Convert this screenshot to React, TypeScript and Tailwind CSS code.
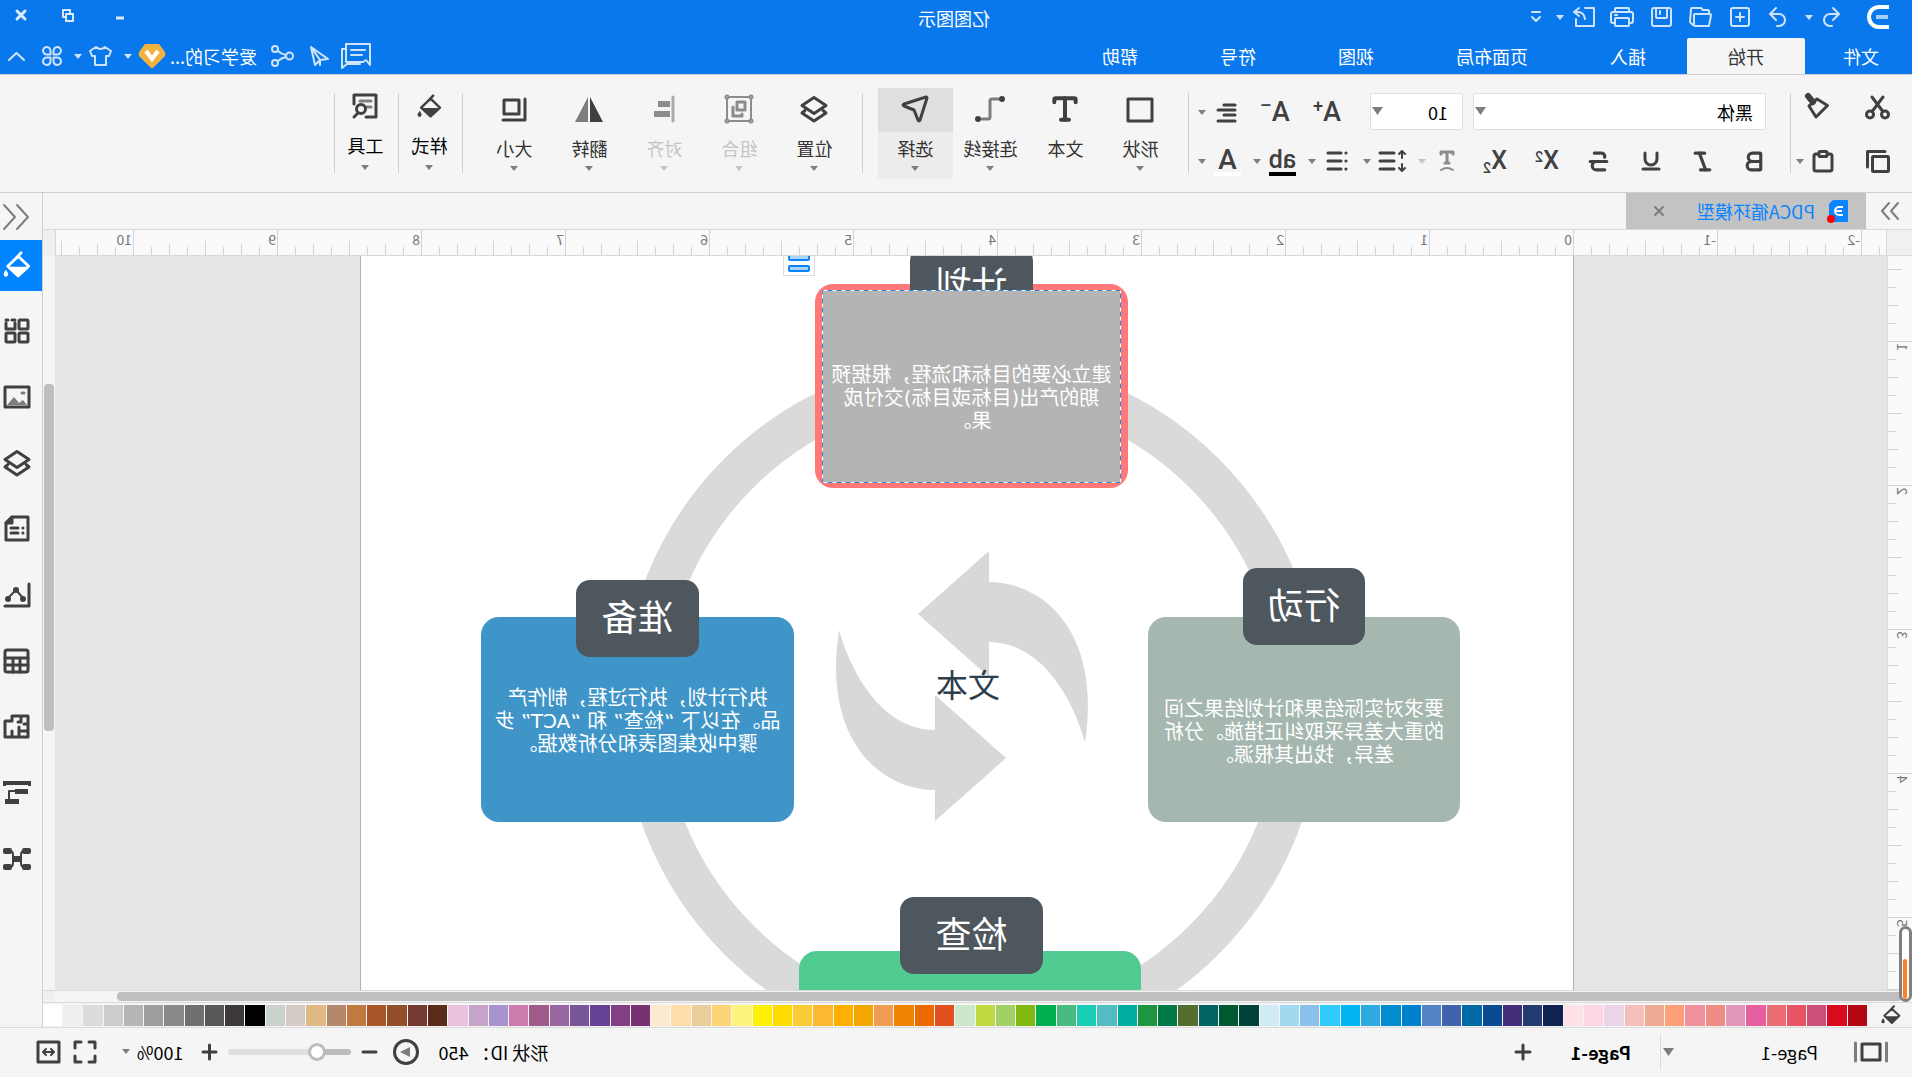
import type { ReactNode } from 'react'
import { Bold, Italic, Strikethrough, Type, Underline } from 'lucide-react'
import clsx from 'clsx'

const TABS = ['开始', '插入', '页面布局', '视图', '符号', '帮助']

const SWATCHES = [
  '#b50713', '#d80a1d', '#cb5078', '#e95464', '#ec6d74', '#e75f9e', '#e198b8', '#ee8c85', '#f0909a', '#ff9f78',
  '#efaa94', '#f6bfbc', '#ead5e8', '#fdd5e4', '#fde1e5', '#10224f', '#243a72', '#432e79', '#094a91', '#006ba6',
  '#4063ad', '#5383c4', '#0081ce', '#008ccd', '#2eaae3', '#00b5f2', '#30cbfb', '#8ac1ea', '#a1d9f0', '#ceebf6',
  '#004237', '#005931', '#006463', '#566d30', '#007a46', '#1d9640', '#00ae9f', '#51bdc2', '#1aceb5', '#47bb80',
  '#00af50', '#80ba10', '#a3d064', '#c0d943', '#cde7ca', '#e2501f', '#ec6900', '#f08300', '#f29b52', '#f1a700',
  '#feb000', '#fdb832', '#f9cb35', '#ffdb00', '#ffef00', '#fcf37e', '#fed575', '#ebcd99', '#fedda9', '#fde9cf',
  '#793271', '#833f83', '#674196', '#775598', '#97689f', '#a05a8c', '#ce7cb0', '#a993cf', '#c6a4c9', '#ebc1db',
  '#5a2a1b', '#763b30', '#944f2a', '#a85527', '#c07a40', '#b5876b', '#dfb884', '#d5cbc6', '#c9d3cb', '#000000',
  '#3e3838', '#595757', '#6f7070', '#888989', '#9d9f9e', '#b4b5b5', '#cbcdcc', '#dcdcdc', '#efefef', '#ffffff',
]

const H_UNITS = [-3, -2, -1, 0, 1, 2, 3, 4, 5, 6, 7, 8, 9, 10]
const V_UNITS = [0, 1, 2, 3, 4, 5]

function Svg({ w, h, sw = 2, children }: { w: number; h: number; sw?: number; children: ReactNode }) {
  return (
    <svg
      width={w}
      height={h}
      viewBox={`0 0 ${w} ${h}`}
      fill="none"
      stroke="currentColor"
      strokeWidth={sw}
      strokeLinecap="round"
      strokeLinejoin="round"
      className="shrink-0 overflow-visible"
      aria-hidden
    >
      {children}
    </svg>
  )
}

function Caret({ className = 'text-[#7d7d7d]' }: { className?: string }) {
  return (
    <svg width="8" height="5" viewBox="0 0 8 5" className={clsx('shrink-0', className)} aria-hidden>
      <path d="M0 0h8L4 5z" fill="currentColor" />
    </svg>
  )
}

function IconButton({ label, className, children }: { label: string; className?: string; children: ReactNode }) {
  return (
    <button type="button" aria-label={label} className={clsx('flex items-center justify-center', className)}>
      {children}
    </button>
  )
}

/* ---------- shared icons ---------- */

function Bucket({ w = 24 }: { w?: number }) {
  return (
    <svg width={w} height={w} viewBox="0 0 24 24" fill="none" stroke="currentColor" className="shrink-0" aria-hidden>
      <path d="M11 4.500 20 13l-9 8.500L2 13z" strokeWidth="2.400" strokeLinejoin="round" />
      <path d="M3 13.500h16.500l-8.500 8z" fill="currentColor" stroke="none" />
      <path d="M12.500 6 8.500 1.500" strokeWidth="2.400" strokeLinecap="round" />
      <path d="M21.500 16c1.300 2 2 3 2 4a2 2 0 0 1-4 0c0-1 .7-2 2-4z" fill="currentColor" stroke="none" />
    </svg>
  )
}

function LayersIcon() {
  return (
    <Svg w={28} h={28} sw={3}>
      <path d="M14 2.500 26 10.500l-12 8-12-8z" />
      <path d="M5 15.500l-3 2.500 12 8 12-8-3-2.500" />
    </Svg>
  )
}

function EdrawMark() {
  return (
    <Svg w={24} h={24} sw={4}>
      <path d="M1 2h10a10 10 0 0 1 0 20H1" strokeLinecap="butt" />
      <path d="M2 12h12" stroke="#a5cdf8" strokeLinecap="butt" />
    </Svg>
  )
}

/* ---------- header ---------- */

function TitleBar() {
  return (
    <div className="grid h-[38px] grid-cols-[1fr_auto_1fr] items-center">
      <div className="flex items-center pb-[4px] pl-[22px] text-[#cfe4fb]">
        <span className="mr-[26px] text-white"><EdrawMark /></span>
        <IconButton label="撤销" className="w-[18px]">
          <Svg w={18} h={20}><path d="M7 1 1 7l6 6M1.500 7H10a6 6 0 0 1 0 12H8" /></Svg>
        </IconButton>
        <IconButton label="撤销列表" className="w-[26px]"><Caret className="text-[#cfe4fb]" /></IconButton>
        <IconButton label="重做" className="w-[36px]">
          <Svg w={18} h={20}><path d="m11 1 6 6-6 6M16.500 7H8a6 6 0 0 0 0 12h2" /></Svg>
        </IconButton>
        <IconButton label="新建" className="w-[40px]">
          <Svg w={20} h={20}><rect x="1" y="1" width="18" height="18" rx="2" /><path d="M10 6v8M6 10h8" /></Svg>
        </IconButton>
        <IconButton label="打开" className="w-[39px]">
          <Svg w={23} h={20}><path d="M3 19 1 8q0-1 1-1h15q1 0 1 1v10q0 1-1 1zM3 7V4q0-1 1-1h5l2-2h9q1 0 1 1l1 13-3 3" /></Svg>
        </IconButton>
        <IconButton label="保存" className="w-[39px]">
          <Svg w={21} h={20}><rect x="1" y="1" width="19" height="18" rx="2" /><path d="M5 1v9q0 1 1 1h9q1 0 1-1V1M12 4v3" /></Svg>
        </IconButton>
        <IconButton label="打印" className="w-[39px]">
          <Svg w={24} h={20}><path d="M5 5V2q0-1 1-1h12q1 0 1 1v3M5 16H3q-2 0-2-2V7q0-2 2-2h18q2 0 2 2v7q0 2-2 2h-2" /><rect x="5" y="11" width="14" height="8" rx="1" /><path d="M17 8h2" /></Svg>
        </IconButton>
        <IconButton label="导出" className="w-[38px]">
          <Svg w={22} h={20}><path d="M10 1H1v18h18v-7" /><path d="m16 1 5 4-5 4M20 5h-3q-6 0-7 7" /></Svg>
        </IconButton>
        <IconButton label="导出列表" className="w-[10px]"><Caret className="text-[#cfe4fb]" /></IconButton>
        <IconButton label="自定义工具栏" className="w-[38px]">
          <Svg w={10} h={12}><path d="M1 1h8M1 6l4 4 4-4" /></Svg>
        </IconButton>
      </div>
      <h1 className="pb-[2px] pl-[4px] text-[18px] leading-[24px] text-white">亿图图示</h1>
      <div className="flex items-center justify-end pb-[8px] text-[#dcebfc]">
        <IconButton label="最小化" className="w-[52px] pt-[6px]"><Svg w={10} h={4} sw={3}><path d="M1 2h8" strokeLinecap="butt" /></Svg></IconButton>
        <IconButton label="还原" className="w-[52px]">
          <Svg w={12} h={13}><rect x="1" y="5" width="7" height="7" /><path d="M4 4V1h7v7H9" /></Svg>
        </IconButton>
        <IconButton label="关闭" className="w-[42px]"><Svg w={10} h={10} sw={3}><path d="m1 1 8 8M9 1 1 9" /></Svg></IconButton>
      </div>
    </div>
  )
}

function MenuBar() {
  return (
    <div className="flex h-[36px] items-stretch text-[18px] leading-[24px] text-white">
      <button type="button" className="w-[107px] pr-[5px]">文件</button>
      <nav className="flex">
        {TABS.map((tab, i) => (
          <button key={tab} type="button" className={clsx('px-[41px]', i === 0 && 'rounded-t-[2px] bg-[#f5f5f5] text-[#333]')}>
            {tab}
          </button>
        ))}
      </nav>
      <div className="ml-auto flex items-center text-[#cfe4fb]">
        <IconButton label="消息" className="w-[43px]">
          <Svg w={30} h={26}>
            <path d="M1 22V1h24v18H8l-3-2z" />
            <path d="M6 7h14M9 12h11" />
            <path d="M25 6h4v19l-5-4H11" />
          </Svg>
        </IconButton>
        <IconButton label="发送" className="w-[31px]">
          <Svg w={20} h={20}><path d="M1 13 18 1l-4 18-5-5zM9 14v5M18 1 9 14" /></Svg>
        </IconButton>
        <IconButton label="分享" className="w-[42px]">
          <Svg w={23} h={22}><circle cx="4.500" cy="11" r="3.500" /><circle cx="19" cy="4" r="3" /><circle cx="19" cy="18" r="3" /><path d="M8 10q5-1 8-4M8 12q5 1 8 4" /></Svg>
        </IconButton>
        <button type="button" className="px-[4px] text-white">爱学习的...</button>
        <IconButton label="会员" className="w-[28px]">
          <svg width="28" height="26" viewBox="0 0 28 26" aria-hidden>
            <path d="M7 1h14l6 8q1 2 0 4L15 25h-2L1 13q-1-2 0-4z" fill="#f3b140" />
            <path d="m8 8 6 8 6-8" fill="none" stroke="#fff" strokeWidth="4" />
          </svg>
        </IconButton>
        <IconButton label="会员菜单" className="w-[20px]"><Caret className="text-[#cfe4fb]" /></IconButton>
        <IconButton label="主题" className="w-[34px]">
          <Svg w={23} h={20}><path d="M7 1 1 5l2 5h3v9h11v-9h3l2-5-6-4q-4.500 4-9 0z" /></Svg>
        </IconButton>
        <IconButton label="主题菜单" className="w-[12px]"><Caret className="text-[#cfe4fb]" /></IconButton>
        <IconButton label="应用" className="w-[40px]">
          <Svg w={20} h={20}>
            <path d="M8.500 8.500H5a3.750 3.750 0 1 1 3.500-3.500zM11.500 8.500H15A3.750 3.750 0 1 0 11.500 5zM8.500 11.500H5A3.750 3.750 0 1 0 8.500 15zM11.500 11.500H15a3.750 3.750 0 1 1-3.500 3.500z" />
          </Svg>
        </IconButton>
        <IconButton label="收起功能区" className="mr-[2px] w-[30px]"><Svg w={17} h={9}><path d="m1 8 7.500-7L16 8" /></Svg></IconButton>
      </div>
    </div>
  )
}

/* ---------- ribbon ---------- */

function Divider() {
  return <div className="h-[80px] w-px shrink-0 bg-[#cfcfcf]" />
}

function Tool({ label, children }: { label: string; children: ReactNode }) {
  return <IconButton label={label} className="h-[30px] w-[52px]">{children}</IconButton>
}

function MenuTool({ label, off, children }: { label: string; off?: boolean; children: ReactNode }) {
  return (
    <button type="button" aria-label={label} disabled={off} className={clsx('flex h-[30px] w-[55px] items-center', off && 'text-[#8c8c8c]')}>
      <span className="flex w-[43px] justify-center">{children}</span>
      <Caret className={off ? 'text-[#c4c4c4]' : 'text-[#7d7d7d]'} />
    </button>
  )
}

function BigTool({ label, off, menu = true, active, narrow, children }: {
  label: string
  off?: boolean
  menu?: boolean
  active?: boolean
  narrow?: boolean
  children: ReactNode
}) {
  return (
    <button
      type="button"
      disabled={off}
      className={clsx(
        'flex h-[91px] flex-col items-center rounded-[2px]',
        narrow ? 'w-[63px] pl-[2px]' : 'w-[75px]',
        active && 'bg-[#ececec]',
        off ? 'text-[#8c8c8c]' : 'text-[#404040]',
      )}
    >
      <span className={clsx('flex h-[44px] w-full items-center justify-center pb-[2px]', active && 'bg-[#dfdfdf]')}>{children}</span>
      <span className={clsx('mt-[4px] text-[18px] leading-[24px]', off ? 'text-[#c4c4c4]' : narrow ? 'text-black' : 'text-[#333]')}>{label}</span>
      {menu && <span className={narrow ? 'mt-[8px]' : 'mt-[6px]'}><Caret className={off ? 'text-[#c4c4c4]' : 'text-[#7d7d7d]'} /></span>}
    </button>
  )
}

function FontControls() {
  return (
    <div className="w-[601px]">
      <div className="flex h-[37px] items-center">
        <div className="relative ml-[24px] w-[293px]">
          <select aria-label="字体" className="h-[37px] w-full appearance-none rounded-[2px] border border-[#dedede] bg-white pt-[2px] pl-[12px] text-[18px] text-black">
            <option>黑体</option>
          </select>
          <svg width="11" height="8" viewBox="0 0 11 8" className="pointer-events-none absolute top-[14px] right-[2px]" aria-hidden>
            <path d="M0 0h11L5.500 8z" fill="#7d7d7d" />
          </svg>
        </div>
        <div className="relative ml-[10px] w-[93px]">
          <select aria-label="字号" className="h-[37px] w-full appearance-none rounded-[2px] border border-[#dedede] bg-white pt-[2px] pl-[14px] text-[18px] text-black">
            <option>10</option>
          </select>
          <svg width="11" height="8" viewBox="0 0 11 8" className="pointer-events-none absolute top-[14px] right-[2px]" aria-hidden>
            <path d="M0 0h11L5.500 8z" fill="#7d7d7d" />
          </svg>
        </div>
        <div className="ml-auto flex pt-[2px] pr-[5px]">
          <Tool label="增大字号"><span className="font-[Roboto] text-[27px] leading-[27px] font-medium">A<sup className="text-[18px] leading-[0]">+</sup></span></Tool>
          <Tool label="减小字号"><span className="font-[Roboto] text-[27px] leading-[27px] font-medium">A<sup className="text-[18px] leading-[0]">–</sup></span></Tool>
          <MenuTool label="对齐方式"><Svg w={20} h={20} sw={3}><path d="M2 2h11M2 7h17M2 12h11M2 18h17" /></Svg></MenuTool>
        </div>
      </div>
      <div className="mt-[15px] flex h-[32px] items-center pl-[9px]">
        <Tool label="加粗"><Bold size={25} strokeWidth={3} /></Tool>
        <Tool label="斜体"><Italic size={25} strokeWidth={3} /></Tool>
        <Tool label="下划线"><Underline size={24} strokeWidth={3} /></Tool>
        <Tool label="删除线"><Strikethrough size={25} strokeWidth={3} /></Tool>
        <Tool label="上标"><span className="font-[Roboto] text-[25px] leading-[26px] font-medium">X<sup className="text-[14px] leading-[0]">2</sup></span></Tool>
        <Tool label="下标"><span className="font-[Roboto] text-[25px] leading-[26px] font-medium">X<sub className="text-[14px] leading-[0]">2</sub></span></Tool>
        <MenuTool label="文字排列" off>
          <Svg w={18} h={22} sw={3}><path d="M3 4V2h12v2M9 2v11M7 13h4" /><path d="M3 20q6-4 12 0" strokeWidth="2" /></Svg>
        </MenuTool>
        <MenuTool label="行距">
          <Svg w={28} h={22} sw={3}><path d="M12 3h14M12 11h14M12 19h14" /><path d="M4 1v7M4 14v7M1 4l3-3 3 3M1 18l3 3 3-3" strokeWidth="2" /></Svg>
        </MenuTool>
        <MenuTool label="项目符号">
          <Svg w={22} h={22} sw={3}><path d="M7 3h13M7 11h13M7 19h13M2 3h.1M2 11h.1M2 19h.1" /></Svg>
        </MenuTool>
        <MenuTool label="突出显示">
          <span className="border-b-[4px] border-black font-[Roboto] text-[25px] leading-[25px] font-medium">ab</span>
        </MenuTool>
        <MenuTool label="字体颜色">
          <span className="w-[27px] border-b-[4px] border-white font-[Roboto] text-[28px] leading-[25px] font-medium">A</span>
        </MenuTool>
      </div>
    </div>
  )
}

function Ribbon() {
  return (
    <div className="flex h-[118px] items-start border-b border-[#cfcfcf] bg-[#f5f5f5] pt-[18px] text-[#404040]">
      <div className="-mt-[1px] grid w-[121px] grid-cols-[56px_1fr] gap-y-[24px] pl-[14px]">
        <IconButton label="剪切" className="h-[30px] w-[40px]">
          <Svg w={25} h={23} sw={3}><circle cx="5" cy="18.500" r="3.500" /><circle cx="20" cy="18.500" r="3.500" /><path d="M7.500 15 18 1M17.500 15 7 1" /></Svg>
        </IconButton>
        <IconButton label="格式刷" className="h-[30px] w-[48px] pb-[2px]">
          <Svg w={23} h={24} sw={3}><path d="M1.500 11.500 12 5l8 7-7 11z" /><path d="m16 8 5-6" strokeWidth="6" /></Svg>
        </IconButton>
        <IconButton label="复制" className="h-[30px] w-[40px]">
          <Svg w={24} h={23} sw={3}><rect x="1.500" y="6.500" width="16" height="15" rx="1" /><path d="M5 1.500h17.500V17" /></Svg>
        </IconButton>
        <IconButton label="粘贴" className="h-[30px] w-[48px] gap-[8px] pl-[6px]">
          <Svg w={22} h={23} sw={3}><path d="M6 4H4Q2 4 2 6v13q0 2 2 2h14q2 0 2-2V6q0-2-2-2h-2" /><rect x="7" y="1.500" width="8" height="5" rx="1" /></Svg>
          <Caret />
        </IconButton>
      </div>
      <Divider />
      <FontControls />
      <Divider />
      <div className="-mt-[5px] flex pl-[10px]">
        <BigTool label="形状"><Svg w={28} h={25} sw={3}><rect x="2" y="2" width="24" height="22" /></Svg></BigTool>
        <BigTool label="文本" menu={false}><Type size={32} strokeWidth={3} /></BigTool>
        <BigTool label="连接线">
          <Svg w={30} h={26} sw={3}>
            <path d="M6 3h7q2 0 2 2v16q0 2 2 2h6" stroke="#7d7d7d" />
            <circle cx="3" cy="3" r="3" fill="currentColor" stroke="none" />
            <circle cx="27" cy="23" r="3" fill="currentColor" stroke="none" />
          </Svg>
        </BigTool>
        <BigTool label="选择" active><Svg w={28} h={28} sw={3}><path d="M3 2q-1 0-1 1l7 22q1 2 2 0l4-10 10-4q2-1 0-2z" /></Svg></BigTool>
      </div>
      <div className="ml-[15px]"><Divider /></div>
      <div className="-mt-[5px] flex pr-[14px] pl-[10px]">
        <BigTool label="位置"><LayersIcon /></BigTool>
        <BigTool label="组合" off>
          <Svg w={30} h={30}>
            <path d="M5 3h20M5 27h20M3 5v20M27 5v20" />
            <circle cx="3" cy="3" r="1.500" /><circle cx="27" cy="3" r="1.500" /><circle cx="3" cy="27" r="1.500" /><circle cx="27" cy="27" r="1.500" />
            <path d="M9 8h8v8H9zM21 13v9h-9v-2" strokeWidth="3" />
          </Svg>
        </BigTool>
        <BigTool label="对齐" off>
          <Svg w={22} h={28} sw={3}>
            <path d="M2 2v24" stroke="#aaa" />
            <path d="M5 6h12v6H5zM5 16h16v6H5z" fill="currentColor" stroke="none" />
          </Svg>
        </BigTool>
        <BigTool label="翻转">
          <Svg w={28} h={25}>
            <path d="M13 0v25H0z" fill="currentColor" stroke="none" />
            <path d="M15 0v25h13z" fill="#7d7d7d" stroke="none" />
          </Svg>
        </BigTool>
        <BigTool label="大小">
          <Svg w={26} h={25} sw={3}><rect x="8" y="3" width="15" height="14" /><path d="M2 2v21h22" /></Svg>
        </BigTool>
      </div>
      <Divider />
      <div className="-mt-[8px]"><BigTool label="样式" narrow><Bucket w={25} /></BigTool></div>
      <Divider />
      <div className="-mt-[8px]">
        <BigTool label="工具" narrow>
          <Svg w={26} h={26} sw={3}>
            <path d="M12 24H2V2h22v9" />
            <path d="M7 8h11M7 14h4" stroke="#7d7d7d" />
            <circle cx="17" cy="16" r="4.500" /><path d="m20 20 4 4" />
          </Svg>
        </BigTool>
      </div>
      <Divider />
    </div>
  )
}

/* ---------- workspace ---------- */

function DocumentTabs() {
  return (
    <div className="flex h-[36px] items-stretch">
      <IconButton label="展开符号库" className="w-[44px] text-[#7d7d7d]">
        <Svg w={18} h={18}><path d="m1 1 7 8-7 8M10 1l7 8-7 8" /></Svg>
      </IconButton>
      <div className="ml-[2px] flex w-[240px] items-center bg-[#c3c3c3] pl-[18px]">
        <svg width="22" height="24" viewBox="0 0 22 24" aria-hidden>
          <path d="M0 2q0-1 1-1h14l4 4v17q0 1-1 1H1q-1 0-1-1z" fill="#0a84ff" />
          <path d="M5 8h4a4 4 0 0 1 0 8H5M6 12h6" fill="none" stroke="#fff" strokeWidth="2" />
          <circle cx="17" cy="20" r="4" fill="#f00" />
        </svg>
        <span className="ml-[11px] text-[18px] leading-[24px] text-[#0a84ff]">PDCA循环模型</span>
        <IconButton label="关闭文档" className="ml-[24px] w-[28px] text-[#7d7d7d]"><Svg w={10} h={10}><path d="m1 1 8 8M9 1 1 9" /></Svg></IconButton>
      </div>
    </div>
  )
}

function HorizontalRuler() {
  return (
    <div className="overflow-hidden border-x border-[#d9d9d9] bg-[#fafafa]">
      <div className="-ml-[120px] flex">
        {H_UNITS.map((n) => (
          <div key={n} className="relative flex h-[25px] shrink-0 items-end">
            {[25, 8, 11, 8, 14, 8, 11, 8].map((h, i) => (
              <div key={i} className="w-[18px] border-l border-[#d3d3d3]" style={{ height: h }} />
            ))}
            {n > -3 && <span className="absolute top-[1px] left-[2px] text-[14px] leading-[16px] text-[#777]">{n}</span>}
          </div>
        ))}
      </div>
    </div>
  )
}

function VerticalRuler() {
  return (
    <div className="overflow-hidden border-r border-[#d9d9d9] bg-[#fafafa]">
      <div className="-mt-[59px]">
        {V_UNITS.map((n) => (
          <div key={n} className="relative flex flex-col items-end">
            {[24, 8, 11, 8, 14, 8, 11, 8].map((w, i) => (
              <div key={i} className="h-[18px] border-t border-[#d3d3d3]" style={{ width: w }} />
            ))}
            {n > 0 && <span className="absolute -top-[2px] left-[5px] -rotate-90 text-[14px] leading-[16px] text-[#777]">{n}</span>}
          </div>
        ))}
      </div>
    </div>
  )
}

function Card({ className, lines }: { className: string; lines: string[] }) {
  return (
    <div className={clsx('absolute text-center font-["DejaVu_Sans","Noto_Sans_CJK_SC",sans-serif] text-[20px] leading-[23px] whitespace-nowrap text-white', className)}>
      {lines.map((line) => <p key={line}>{line}</p>)}
    </div>
  )
}

function Label({ className, text }: { className: string; text: string }) {
  return (
    <div className={clsx('absolute flex h-[77px] items-center justify-center rounded-[14px] bg-[#4e575e] pb-[8px] text-[36px] leading-[40px] text-white', className)}>
      {text}
    </div>
  )
}

function Canvas() {
  return (
    <div className="overflow-hidden bg-[#e5e5e5]">
      <div className="relative ml-[313px] h-full w-[1214px] border-x border-[#b0b0b0] bg-white">
        <svg width="1212" height="734" viewBox="0 0 1212 734" className="absolute top-0 left-0" aria-hidden>
          <circle cx="601.500" cy="450.500" r="329.500" fill="none" stroke="#dadada" strokeWidth="41" />
          <g fill="#d8d8d8">
            <path d="M655 358 584 295v31C531 326 471 374 488 486c15-52 48-100 96-100v35z" />
            <path d="M655 358 584 295v31C531 326 471 374 488 486c15-52 48-100 96-100v35z" transform="rotate(180 611 430)" />
          </g>
        </svg>
        <p className="absolute top-[407px] left-[573px] text-[32px] leading-[40px] text-[#2d3e4e]">文本</p>

        <div className="absolute top-[28px] left-[445px] h-[204px] w-[313px] rounded-[18px] bg-[#ff7878]" />
        <Label className="-top-[9px] left-[540px] w-[123px]" text="计划" />
        <Card
          className="top-[34px] left-[452px] h-[193px] w-[299px] bg-[#b4b4b4] pt-[74px]"
          lines={['建立必要的目标和流程，根据预', '期的产出(目标或目标)交付成', '果。']}
        />
        <svg width="299" height="193" viewBox="0 0 299 193" fill="none" className="absolute top-[34px] left-[452px]" aria-hidden>
          <rect x="0.500" y="0.500" width="298" height="192" stroke="#fff" />
          <rect x="0.500" y="0.500" width="298" height="192" stroke="#2f87e0" strokeDasharray="5 4" />
        </svg>

        <Card
          className="top-[361px] left-[113px] h-[205px] w-[312px] rounded-[18px] bg-[#a5b7af] pt-[81px]"
          lines={['要求对实际结果和计划结果之间', '的重大差异采取纠正措施。分析', '差异，找出其根源。']}
        />
        <Label className="top-[312px] left-[208px] w-[122px]" text="行动" />

        <Card
          className="top-[361px] left-[779px] h-[205px] w-[313px] rounded-[18px] bg-[#4095c8] pt-[70px]"
          lines={['执行计划，执行过程，制作产', '品。在以下 “检查” 和 “ACT” 步', '骤中收集图表和分析数据。']}
        />
        <Label className="top-[324px] left-[874px] w-[123px]" text="准备" />

        <div className="absolute top-[695px] left-[432px] h-[205px] w-[342px] rounded-[18px] bg-[#52cb92]" />
        <Label className="top-[641px] left-[530px] w-[143px]" text="检查" />

        <button type="button" aria-label="浮动按钮" className="absolute -top-[12px] left-[758px] flex h-[32px] w-[32px] flex-col items-center justify-end gap-[4px] border border-[#dcdcdc] bg-white pb-[3px]">
          <span className="h-[7px] w-[22px] rounded-[2px] border-2 border-[#0a84ff] bg-[#a9d3ff]" />
          <span className="h-[7px] w-[22px] rounded-[2px] border-2 border-[#0a84ff] bg-[#a9d3ff]" />
        </button>
      </div>
    </div>
  )
}

function Palette() {
  return (
    <div className="flex h-[25px] items-center border-t border-[#d9d9d9] text-[#404040]">
      <IconButton label="填充颜色" className="w-[45px] pr-[4px]"><Bucket w={20} /></IconButton>
      <div className="flex h-[21px] flex-1 gap-px">
        {SWATCHES.map((c) => (
          <button key={c} type="button" aria-label={c} className="flex-1" style={{ backgroundColor: c }} />
        ))}
      </div>
    </div>
  )
}

/* ---------- side panel ---------- */

const PANELS: { label: string; icon: ReactNode }[] = [
  { label: '填充', icon: <Bucket w={28} /> },
  {
    label: '符号',
    icon: (
      <Svg w={26} h={26} sw={3}>
        <rect x="2" y="2" width="9" height="9" rx="1" /><rect x="2" y="15" width="9" height="9" rx="1" /><rect x="15" y="15" width="9" height="9" rx="1" />
        <path d="M15 5v6h9V5M15 2h3M22 2h2" />
      </Svg>
    ),
  },
  {
    label: '图片',
    icon: (
      <Svg w={28} h={24} sw={3}>
        <rect x="2" y="2" width="24" height="20" />
        <path d="m4 20 4-5 4 3 5-6 7 8z" fill="#7d7d7d" stroke="none" />
        <path d="M7 8h2" stroke="#7d7d7d" />
      </Svg>
    ),
  },
  { label: '图层', icon: <LayersIcon /> },
  {
    label: '页面',
    icon: (
      <Svg w={26} h={27} sw={3}>
        <path d="M2 2h16l6 6v17H2z" /><path d="M18 2v6h6z" fill="currentColor" />
        <path d="M12 13h7M12 18h7M7 13h.1M7 18h.1" />
      </Svg>
    ),
  },
  {
    label: '图表',
    icon: (
      <Svg w={28} h={26} sw={3}>
        <path d="M2 2v22h24" />
        <path d="m8 16 7-8 8 8" strokeWidth="2" />
        <g fill="currentColor" stroke="none"><circle cx="8" cy="17" r="3" /><circle cx="15" cy="8" r="3" /><circle cx="23" cy="17" r="3" /></g>
      </Svg>
    ),
  },
  {
    label: '表格',
    icon: <Svg w={27} h={26} sw={3}><rect x="2" y="2" width="23" height="22" rx="2" /><path d="M2 10h23M2 17h23M10 10v14M17 10v14" /></Svg>,
  },
  {
    label: '平面图',
    icon: <Svg w={27} h={25} sw={3}><path d="M2 2h16v5h7v16H2zM9 2v6h3M2 10h4M2 17h9v-4M11 17v6M18 17v6" /></Svg>,
  },
  {
    label: '甘特图',
    icon: (
      <Svg w={28} h={25}>
        <path d="M0 1h28v5h-3V5H3v1H0zM3 9h13v5H3zM12 19h14v5H12z" fill="currentColor" stroke="none" />
        <path d="M16 11h6v9" />
      </Svg>
    ),
  },
  {
    label: '导图',
    icon: (
      <Svg w={28} h={24}>
        <path d="M7 4q3 0 3 4v8q0 4-3 4M21 4q-3 0-3 4v8q0 4 3 4M10 12h8" />
        <g fill="currentColor" stroke="none">
          <rect y="1" width="9" height="6" rx="2" /><rect x="19" y="1" width="9" height="6" rx="2" />
          <rect y="17" width="9" height="6" rx="2" /><rect x="19" y="17" width="9" height="6" rx="2" />
          <rect x="10" y="9" width="8" height="6" rx="1" />
        </g>
      </Svg>
    ),
  },
]

function SidePanel() {
  return (
    <aside className="flex w-[43px] flex-col border-l border-[#cfcfcf] text-[#404040]">
      <IconButton label="收起面板" className="h-[47px] pl-[8px] text-[#7d7d7d]">
        <Svg w={27} h={26}><path d="M13 1 2 13l11 12M26 1 15 13l11 12" /></Svg>
      </IconButton>
      {PANELS.map((p, i) => (
        <div key={p.label} className="flex h-[66px] flex-col">
          <IconButton label={p.label} className={clsx('h-[51px] pb-[2px] pl-[8px]', i === 0 && 'bg-[#0084ff] text-white')}>
            {p.icon}
          </IconButton>
        </div>
      ))}
    </aside>
  )
}

function StatusBar() {
  return (
    <footer className="flex h-[50px] items-center border-t border-[#d9d9d9] pb-[2px] text-[18px] leading-[24px] text-black">
      <IconButton label="页面列表" className="ml-[24px] text-[#404040]">
        <Svg w={34} h={20}><path d="M1.500 1v18M32.500 1v18" stroke="#7d7d7d" strokeWidth="3" /><rect x="8" y="2" width="18" height="16" strokeWidth="3" /></Svg>
      </IconButton>
      <div className="relative ml-[36px] w-[157px]">
        <select aria-label="当前页" className="w-full appearance-none">
          <option>Page-1</option>
        </select>
        <svg width="11" height="8" viewBox="0 0 11 8" className="pointer-events-none absolute top-[8px] right-[2px]" aria-hidden>
          <path d="M0 0h11L5.500 8z" fill="#7d7d7d" />
        </svg>
      </div>
      <div className="h-[36px] w-px bg-[#d9d9d9]" />
      <button type="button" className="ml-[29px] font-bold">Page-1</button>
      <IconButton label="新建页面" className="ml-[40px] text-[#404040]"><Svg w={16} h={16} sw={3}><path d="M8 1v14M1 8h14" /></Svg></IconButton>
      <div className="ml-auto flex items-center pr-[36px] text-[#404040]">
        <span className="mr-[20px] text-black">形状 ID： 450</span>
        <IconButton label="演示" className="mr-[16px]">
          <Svg w={26} h={26} sw={3}><circle cx="13" cy="13" r="11.500" /><path d="M9 8v10l10-5z" fill="#7d7d7d" stroke="none" /></Svg>
        </IconButton>
        <IconButton label="缩小" className="mr-[11px]"><Svg w={15} h={16} sw={3}><path d="M1 8h13" /></Svg></IconButton>
        <input
          type="range"
          aria-label="缩放"
          defaultValue={23}
          className="h-[6px] w-[123px] appearance-none rounded-full bg-linear-to-r from-[#bdbdbd] from-27% to-[#dfdfdf] to-27% [&::-webkit-slider-thumb]:h-[18px] [&::-webkit-slider-thumb]:w-[18px] [&::-webkit-slider-thumb]:appearance-none [&::-webkit-slider-thumb]:rounded-full [&::-webkit-slider-thumb]:border-3 [&::-webkit-slider-thumb]:border-[#bdbdbd] [&::-webkit-slider-thumb]:bg-white"
        />
        <IconButton label="放大" className="mx-[11px]"><Svg w={15} h={16} sw={3}><path d="M7.500 1v14M1 8h13" /></Svg></IconButton>
        <button type="button" className="ml-[7px] flex items-center gap-[7px] text-black">100%<Caret /></button>
        <IconButton label="适应窗口" className="ml-[25px]">
          <Svg w={24} h={24} sw={3}><path d="M2 8V2h6M16 2h6v6M22 16v6h-6M8 22H2v-6" /></Svg>
        </IconButton>
        <IconButton label="适应页宽" className="ml-[12px]">
          <Svg w={25} h={24} sw={3}><rect x="2" y="2" width="21" height="20" /><path d="M7 12h11M10 9l-3 3 3 3M15 9l3 3-3 3" strokeWidth="2" /></Svg>
        </IconButton>
      </div>
    </footer>
  )
}

export default function App() {
  // the whole window is shown flipped left to right
  return (
    <div className="flex h-screen -scale-x-100 flex-col overflow-hidden bg-[#f5f5f5] font-['Noto_Sans_CJK_SC',sans-serif]">
      <header className="border-b border-[#cfcfcf] bg-[#0a78ed]">
        <TitleBar />
        <MenuBar />
      </header>
      <Ribbon />
      <div className="flex min-h-0 flex-1">
        <main className="flex min-w-0 flex-1 flex-col">
          <DocumentTabs />
          <div className="relative grid min-h-0 flex-1 grid-cols-[25px_minmax(0,1fr)_12px] grid-rows-[26px_minmax(0,1fr)_12px] border-t border-[#d9d9d9]">
            <div className="border-b border-[#d9d9d9] bg-[#f0f0f0]" />
            <div className="border-b border-[#d9d9d9]"><HorizontalRuler /></div>
            <div className="bg-[#f0f0f0]" />
            <VerticalRuler />
            <Canvas />
            <div className="px-[1px] pt-[128px]"><div className="h-[347px] rounded-[4px] bg-[#bfbfbf]" /></div>
            <div className="col-span-2 border-t border-[#d9d9d9] pt-[1px] pr-[62px] pl-[10px]">
              <div className="h-[9px] rounded-[4px] bg-[#bfbfbf]" />
            </div>
            <div className="border-t border-[#d9d9d9] bg-[#f0f0f0]" />
            <div className="absolute bottom-0 left-0 flex h-[76px] w-[13px] items-end justify-center rounded-full border-3 border-[#808080] bg-white">
              <div className="h-[40px] w-[4px] rounded-full bg-[#ff7f27]" />
            </div>
          </div>
          <Palette />
        </main>
        <SidePanel />
      </div>
      <StatusBar />
    </div>
  )
}
